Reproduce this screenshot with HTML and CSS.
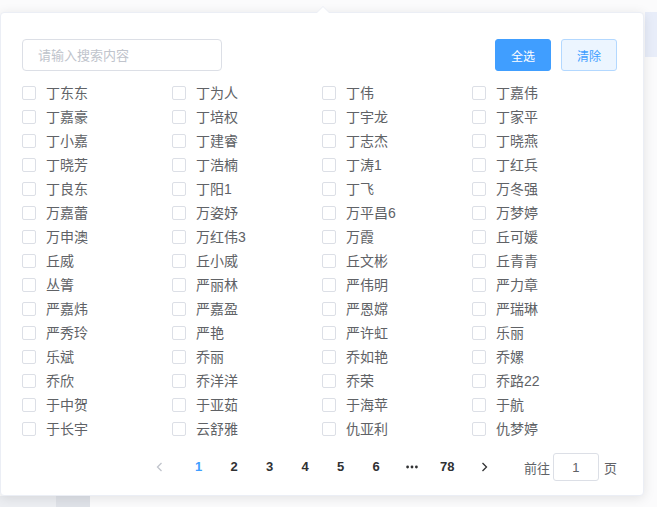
FILE: index.html
```html
<!DOCTYPE html>
<html lang="zh-CN">
<head>
<meta charset="utf-8">
<title>选择人员</title>
<link rel="stylesheet" href="styles.css">
</head>
<body>
<div class="page">
  <div class="page-top"><div class="side-panel"></div></div>
  <div class="page-fill"></div>
  <div class="page-bottom"><div class="bar-a"></div><div class="bar-b"></div></div>
</div>

<div class="popover">
  <div class="header">
    <input class="search" type="text" placeholder="请输入搜索内容">
    <div class="actions">
      <button class="btn btn-primary">全选</button>
      <button class="btn btn-plain">清除</button>
    </div>
  </div>

  <div class="grid">
    <label class="item"><span class="box"></span><span class="name">丁东东</span></label>
    <label class="item"><span class="box"></span><span class="name">丁为人</span></label>
    <label class="item"><span class="box"></span><span class="name">丁伟</span></label>
    <label class="item"><span class="box"></span><span class="name">丁嘉伟</span></label>

    <label class="item"><span class="box"></span><span class="name">丁嘉豪</span></label>
    <label class="item"><span class="box"></span><span class="name">丁培权</span></label>
    <label class="item"><span class="box"></span><span class="name">丁宇龙</span></label>
    <label class="item"><span class="box"></span><span class="name">丁家平</span></label>

    <label class="item"><span class="box"></span><span class="name">丁小嘉</span></label>
    <label class="item"><span class="box"></span><span class="name">丁建睿</span></label>
    <label class="item"><span class="box"></span><span class="name">丁志杰</span></label>
    <label class="item"><span class="box"></span><span class="name">丁晓燕</span></label>

    <label class="item"><span class="box"></span><span class="name">丁晓芳</span></label>
    <label class="item"><span class="box"></span><span class="name">丁浩楠</span></label>
    <label class="item"><span class="box"></span><span class="name">丁涛1</span></label>
    <label class="item"><span class="box"></span><span class="name">丁红兵</span></label>

    <label class="item"><span class="box"></span><span class="name">丁良东</span></label>
    <label class="item"><span class="box"></span><span class="name">丁阳1</span></label>
    <label class="item"><span class="box"></span><span class="name">丁飞</span></label>
    <label class="item"><span class="box"></span><span class="name">万冬强</span></label>

    <label class="item"><span class="box"></span><span class="name">万嘉蕾</span></label>
    <label class="item"><span class="box"></span><span class="name">万姿妤</span></label>
    <label class="item"><span class="box"></span><span class="name">万平昌6</span></label>
    <label class="item"><span class="box"></span><span class="name">万梦婷</span></label>

    <label class="item"><span class="box"></span><span class="name">万申澳</span></label>
    <label class="item"><span class="box"></span><span class="name">万红伟3</span></label>
    <label class="item"><span class="box"></span><span class="name">万霞</span></label>
    <label class="item"><span class="box"></span><span class="name">丘可媛</span></label>

    <label class="item"><span class="box"></span><span class="name">丘威</span></label>
    <label class="item"><span class="box"></span><span class="name">丘小威</span></label>
    <label class="item"><span class="box"></span><span class="name">丘文彬</span></label>
    <label class="item"><span class="box"></span><span class="name">丘青青</span></label>

    <label class="item"><span class="box"></span><span class="name">丛箐</span></label>
    <label class="item"><span class="box"></span><span class="name">严丽林</span></label>
    <label class="item"><span class="box"></span><span class="name">严伟明</span></label>
    <label class="item"><span class="box"></span><span class="name">严力章</span></label>

    <label class="item"><span class="box"></span><span class="name">严嘉炜</span></label>
    <label class="item"><span class="box"></span><span class="name">严嘉盈</span></label>
    <label class="item"><span class="box"></span><span class="name">严恩嫦</span></label>
    <label class="item"><span class="box"></span><span class="name">严瑞琳</span></label>

    <label class="item"><span class="box"></span><span class="name">严秀玲</span></label>
    <label class="item"><span class="box"></span><span class="name">严艳</span></label>
    <label class="item"><span class="box"></span><span class="name">严许虹</span></label>
    <label class="item"><span class="box"></span><span class="name">乐丽</span></label>

    <label class="item"><span class="box"></span><span class="name">乐斌</span></label>
    <label class="item"><span class="box"></span><span class="name">乔丽</span></label>
    <label class="item"><span class="box"></span><span class="name">乔如艳</span></label>
    <label class="item"><span class="box"></span><span class="name">乔嫘</span></label>

    <label class="item"><span class="box"></span><span class="name">乔欣</span></label>
    <label class="item"><span class="box"></span><span class="name">乔洋洋</span></label>
    <label class="item"><span class="box"></span><span class="name">乔荣</span></label>
    <label class="item"><span class="box"></span><span class="name">乔路22</span></label>

    <label class="item"><span class="box"></span><span class="name">于中贺</span></label>
    <label class="item"><span class="box"></span><span class="name">于亚茹</span></label>
    <label class="item"><span class="box"></span><span class="name">于海苹</span></label>
    <label class="item"><span class="box"></span><span class="name">于航</span></label>

    <label class="item"><span class="box"></span><span class="name">于长宇</span></label>
    <label class="item"><span class="box"></span><span class="name">云舒雅</span></label>
    <label class="item"><span class="box"></span><span class="name">仇亚利</span></label>
    <label class="item"><span class="box"></span><span class="name">仇梦婷</span></label>
  </div>

  <div class="pagination">
    <span class="btn-prev"><svg width="7" height="10" viewBox="0 0 7 10"><path d="M5.5 1 L1.5 5 L5.5 9" fill="none" stroke="currentColor" stroke-width="1.3"/></svg></span>
    <ul class="pager">
      <li class="num active">1</li>
      <li class="num">2</li>
      <li class="num">3</li>
      <li class="num">4</li>
      <li class="num">5</li>
      <li class="num">6</li>
      <li class="num more"><svg width="12" height="4" viewBox="0 0 12 4"><circle cx="1.6" cy="2" r="1.4"/><circle cx="6" cy="2" r="1.4"/><circle cx="10.4" cy="2" r="1.4"/></svg></li>
      <li class="num">78</li>
    </ul>
    <span class="btn-next"><svg width="7" height="10" viewBox="0 0 7 10"><path d="M1.5 1 L5.5 5 L1.5 9" fill="none" stroke="currentColor" stroke-width="1.3"/></svg></span>
    <span class="jump">前往<input class="jump-input" type="text" value="1">页</span>
  </div>

  <span class="arrow"></span>
</div>
</body>
</html>
```

FILE: styles.css
```css
* { box-sizing: border-box; }

html, body {
  margin: 0;
  padding: 0;
}

body {
  width: 657px;
  height: 507px;
  overflow: hidden;
  position: relative;
  background: #ffffff;
  font-family: "Liberation Sans", "Noto Sans CJK SC", sans-serif;
}

/* underlying page, mostly hidden by the popover */
.page {
  display: flex;
  flex-direction: column;
  height: 507px;
  background: #fbfbfc;
}
.page-top {
  display: flex;
  justify-content: flex-end;
  padding-top: 12px;
}
.side-panel {
  width: 12px;
  height: 45px;
  background: #e8edf9;
}
.page-fill {
  flex: 1;
}
.page-bottom {
  display: flex;
  height: 11px;
}
.bar-a {
  width: 56px;
  background: #eceef2;
}
.bar-b {
  width: 34px;
  background: #dfe2e8;
}

/* popover */
.popover {
  position: absolute;
  left: 0;
  top: 12px;
  width: 644px;
  background: #fff;
  border: 1px solid #ebeef5;
  border-radius: 4px;
  box-shadow: 0 2px 12px 0 rgba(0, 0, 0, 0.1);
  padding: 26px 21px 12px 21px;
}

.arrow {
  position: absolute;
  top: -7px;
  left: 315px;
  width: 0;
  height: 0;
  border-left: 7px solid transparent;
  border-right: 7px solid transparent;
  border-bottom: 7px solid #ebeef5;
}
.arrow::after {
  content: "";
  position: absolute;
  left: -6px;
  top: 1px;
  border-left: 6px solid transparent;
  border-right: 6px solid transparent;
  border-bottom: 6px solid #fff;
}

.header {
  display: flex;
  justify-content: space-between;
  align-items: center;
  padding-right: 5px;
}

.search {
  width: 200px;
  height: 32px;
  border: 1px solid #dcdfe6;
  border-radius: 4px;
  padding: 0 15px;
  font-family: inherit;
  font-size: 13px;
  color: #606266;
  outline: none;
}
.search::placeholder {
  color: #c0c4cc;
}

.actions {
  display: flex;
  gap: 10px;
}

.btn {
  width: 56px;
  height: 32px;
  border-radius: 3px;
  font-family: inherit;
  font-size: 12px;
  padding: 0;
  cursor: pointer;
}
.btn-primary {
  background: #409eff;
  border: 1px solid #409eff;
  color: #fff;
}
.btn-plain {
  background: #ecf5ff;
  border: 1px solid #b3d8ff;
  color: #409eff;
}

.grid {
  margin-top: 10px;
  display: grid;
  grid-template-columns: repeat(4, 150px);
  grid-auto-rows: 24px;
}

.item {
  display: flex;
  align-items: center;
  cursor: pointer;
}
.box {
  width: 14px;
  height: 14px;
  border: 1px solid #dcdfe6;
  border-radius: 2px;
  background: #fff;
  flex: none;
}
.name {
  margin-left: 10px;
  font-size: 14px;
  color: #606266;
  line-height: 24px;
}

/* pagination */
.pagination {
  margin-top: 10px;
  padding: 2px 5px;
  display: flex;
  justify-content: flex-end;
  align-items: center;
  height: 32px;
  color: #303133;
}
.btn-prev,
.btn-next {
  width: 36px;
  height: 28px;
  display: flex;
  align-items: center;
  justify-content: center;
}
.btn-prev {
  padding-right: 6px;
  color: #c0c4cc;
}
.btn-next {
  padding-left: 4px;
  color: #303133;
}
.pager {
  list-style: none;
  margin: 0;
  padding: 0;
  display: flex;
}
.num {
  width: 35.5px;
  height: 28px;
  line-height: 28px;
  text-align: center;
  font-size: 13px;
  font-weight: bold;
  color: #303133;
}
.num.active {
  color: #409eff;
}
.more {
  display: flex;
  align-items: center;
  justify-content: center;
  fill: #303133;
}

.jump {
  margin-left: 23px;
  display: flex;
  align-items: center;
  font-size: 13px;
  color: #606266;
}
.jump-input {
  width: 46px;
  height: 28px;
  margin: 0 5px 0 3px;
  border: 1px solid #dcdfe6;
  border-radius: 3px;
  text-align: center;
  font-family: inherit;
  font-size: 13px;
  color: #606266;
  padding: 0 3px;
  outline: none;
}
```
